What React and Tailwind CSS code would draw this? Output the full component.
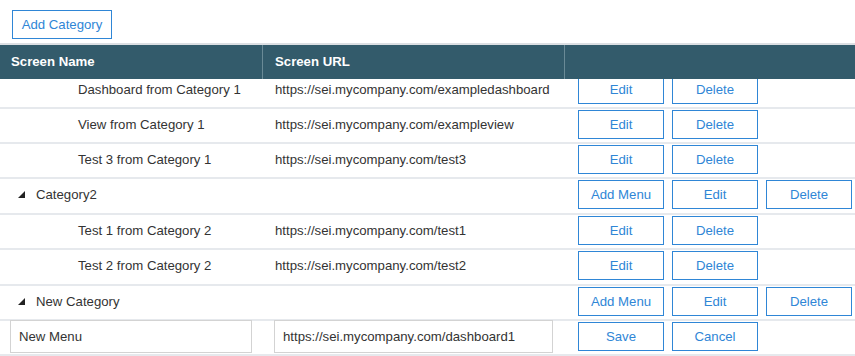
const rows = [
  { type: 'item', h: 'h-[35px]', name: 'Dashboard from Category 1', url: 'https://sei.mycompany.com/exampledashboard' },
  { type: 'item', h: 'h-[35px]', name: 'View from Category 1', url: 'https://sei.mycompany.com/exampleview' },
  { type: 'item', h: 'h-[35px]', name: 'Test 3 from Category 1', url: 'https://sei.mycompany.com/test3' },
  { type: 'category', h: 'h-[36px]', name: 'Category2' },
  { type: 'item', h: 'h-[35px]', name: 'Test 1 from Category 2', url: 'https://sei.mycompany.com/test1' },
  { type: 'item', h: 'h-[36px]', name: 'Test 2 from Category 2', url: 'https://sei.mycompany.com/test2' },
  { type: 'category', h: 'h-[35px]', name: 'New Category' },
  { type: 'new', h: 'h-[35px]', name: 'New Menu', url: 'https://sei.mycompany.com/dashboard1' },
];

function Btn({ children }) {
  return (
    <button className="h-[29px] w-[86px] border border-[#2f86d6] bg-white text-[#2f86d6] leading-none">
      {children}
    </button>
  );
}

function Caret() {
  return (
    <svg width="7" height="7" viewBox="0 0 7 7" className="mr-[11px]">
      <polygon points="7,0 7,7 0,7" fill="#222" />
    </svg>
  );
}

export default function App() {
  return (
    <div className="w-[855px] h-[356px] overflow-hidden bg-white font-['Liberation_Sans',Arial,sans-serif] text-[13.2px] text-[#333]">
      <div className="pt-[10px] pl-[12px] pb-[4px]">
        <button className="h-[29px] w-[100px] border border-[#2f86d6] bg-white text-[#2f86d6]">
          Add Category
        </button>
      </div>

      {/* header */}
      <div className="border-t-2 border-[#dcdfe3] bg-[#335b6b] h-[36px] flex text-white font-bold">
        <div className="w-[263px] border-r border-[#6a8a96] flex items-center pl-[11px]">Screen Name</div>
        <div className="w-[302px] border-r border-[#6a8a96] flex items-center pl-[12px]">Screen URL</div>
        <div className="flex-1"></div>
      </div>

      {/* body, scrolled a bit */}
      <div className="h-[277px] overflow-hidden">
        <div className="-mt-[5px]">
          {rows.map((r, i) => (
            <div key={i} className={`${r.h} flex items-start border-b-2 border-[#e6e9ed]`}>
              {r.type === 'item' && (
                <>
                  <div className="w-[263px] h-[31px] flex items-center pl-[78px]">{r.name}</div>
                  <div className="w-[302px] h-[31px] flex items-center pl-[12px]">{r.url}</div>
                  <div className="flex-1 h-[31px] flex items-center gap-[8px] pl-[13px]">
                    <Btn>Edit</Btn>
                    <Btn>Delete</Btn>
                  </div>
                </>
              )}
              {r.type === 'category' && (
                <>
                  <div className="w-[565px] h-[31px] pl-[18px] flex items-center">
                    <Caret />
                    {r.name}
                  </div>
                  <div className="flex-1 h-[31px] flex items-center gap-[8px] pl-[13px]">
                    <Btn>Add Menu</Btn>
                    <Btn>Edit</Btn>
                    <Btn>Delete</Btn>
                  </div>
                </>
              )}
              {r.type === 'new' && (
                <>
                  <div className="w-[263px] h-[31px] flex items-center pl-[10px]">
                    <input
                      defaultValue={r.name}
                      className="w-[242px] h-[33px] shrink-0 border border-[#d3d3d3] px-[8px] text-[#333] outline-none"
                    />
                  </div>
                  <div className="w-[302px] h-[31px] flex items-center pl-[11px]">
                    <input
                      defaultValue={r.url}
                      className="w-[279px] h-[33px] shrink-0 border border-[#d3d3d3] px-[8px] text-[#333] outline-none"
                    />
                  </div>
                  <div className="flex-1 h-[31px] flex items-center gap-[8px] pl-[13px]">
                    <Btn>Save</Btn>
                    <Btn>Cancel</Btn>
                  </div>
                </>
              )}
            </div>
          ))}
        </div>
      </div>
    </div>
  );
}
